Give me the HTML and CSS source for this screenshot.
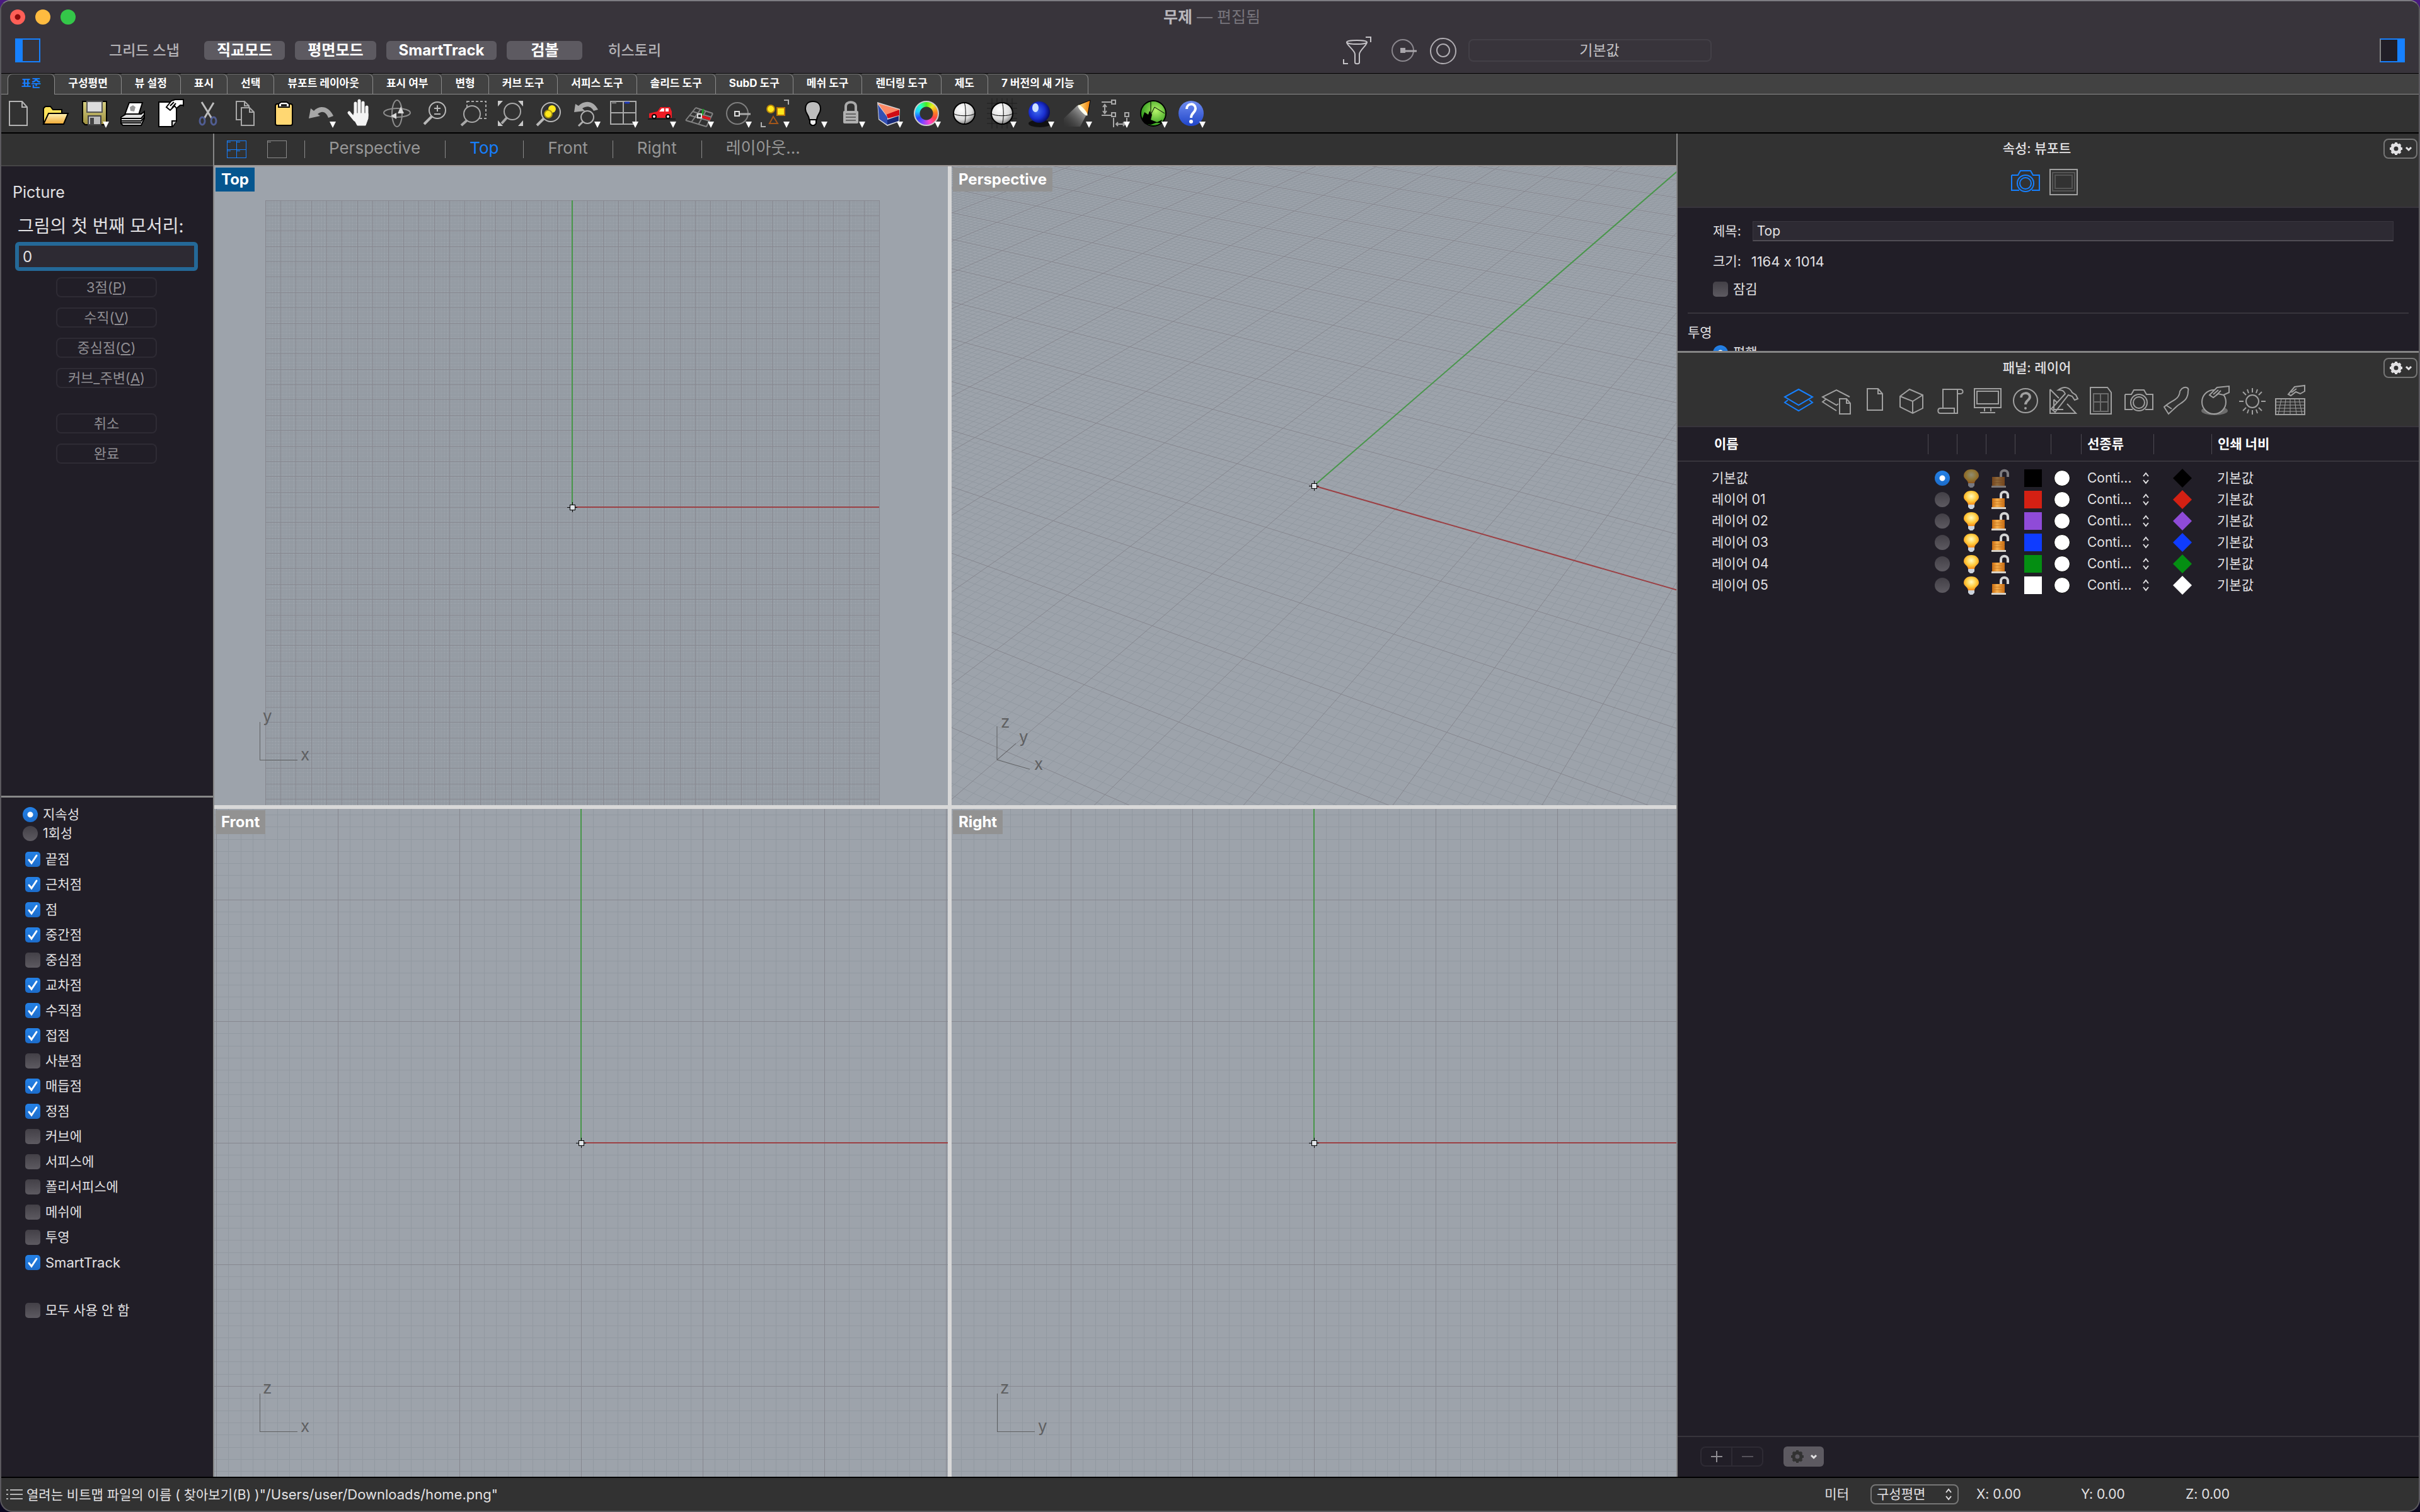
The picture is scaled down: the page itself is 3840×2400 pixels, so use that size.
FILE: index.html
```html
<!DOCTYPE html>
<html lang="ko">
<head>
    <meta charset="UTF-8">
    <meta name="viewport" content="width=device-width, initial-scale=1.0">
    <title>무제</title>
    <link rel="stylesheet" href="styles.css">
</head>
<body>

<!-- shared symbols and gradients -->
<svg class="defs" width="0" height="0" aria-hidden="true">
    <defs>
        <linearGradient id="gold" x1="0" y1="0" x2="0" y2="1"><stop offset="0" stop-color="#fff4b8"/><stop offset="1" stop-color="#f0a832"/></linearGradient>
        <linearGradient id="olive" x1="0" y1="0" x2="0" y2="1"><stop offset="0" stop-color="#d6cf83"/><stop offset="1" stop-color="#9d8f3e"/></linearGradient>
        <linearGradient id="orange" x1="0" y1="0" x2="1" y2="0"><stop offset="0" stop-color="#c8690e"/><stop offset=".4" stop-color="#f7b04e"/><stop offset="1" stop-color="#c8690e"/></linearGradient>
        <linearGradient id="cone" x1="0" y1="0" x2="1" y2="0"><stop offset="0" stop-color="#fff2a0"/><stop offset="1" stop-color="#f07c00"/></linearGradient>
        <linearGradient id="beam" x1="1" y1="0" x2="0" y2="1"><stop offset="0" stop-color="#ddd"/><stop offset="1" stop-color="#444" stop-opacity="0"/></linearGradient>
        <radialGradient id="ball" cx=".38" cy=".3" r=".8"><stop offset="0" stop-color="#fff"/><stop offset=".6" stop-color="#ddd"/><stop offset="1" stop-color="#666"/></radialGradient>
        <radialGradient id="blueball" cx=".4" cy=".45" r=".6"><stop offset="0" stop-color="#3f6af0"/><stop offset=".6" stop-color="#1a2fd0"/><stop offset="1" stop-color="#060a60"/></radialGradient>
        <radialGradient id="green" cx=".6" cy=".4" r=".6"><stop offset="0" stop-color="#b6f56a"/><stop offset="1" stop-color="#2f9a1c"/></radialGradient>
        <radialGradient id="glow" cx=".5" cy=".4" r=".6"><stop offset="0" stop-color="#fffbc0"/><stop offset=".6" stop-color="#ffc93a"/><stop offset="1" stop-color="#f58a1a"/></radialGradient>
        <linearGradient id="help" x1="0" y1="0" x2="0" y2="1"><stop offset="0" stop-color="#6f8cf0"/><stop offset="1" stop-color="#1f45c8"/></linearGradient>
    </defs>
    <symbol id="more" viewBox="0 0 10 10"><path d="M0 0H10L5 10Z" fill="#fff"/></symbol>
    <symbol id="gear" viewBox="0 0 24 24">
        <circle cx="12" cy="12" r="6" fill="none" stroke="currentColor" stroke-width="5"/>
        <path d="M12 2V7M12 17V22M2 12H7M17 12H22M5 5L8 8M16 16L19 19M19 5L16 8M8 16L5 19" stroke="currentColor" stroke-width="4"/>
    </symbol>
    <symbol id="down" viewBox="0 0 12 12"><path d="M2 4L6 8L10 4" fill="none" stroke="currentColor" stroke-width="3"/></symbol>
    <symbol id="updown" viewBox="0 0 12 24"><path d="M2 9L6 4L10 9M2 15L6 20L10 15" fill="none" stroke="currentColor" stroke-width="2"/></symbol>
    <symbol id="camera" viewBox="0 0 60 60">
        <path d="M8 19H18L22 12H38L42 19H52V43H40M20 43H8V19" fill="none" stroke="currentColor" stroke-width="2"/>
        <circle cx="30" cy="32" r="13" fill="none" stroke="currentColor" stroke-width="2"/>
        <circle cx="30" cy="32" r="9" fill="none" stroke="currentColor" stroke-width="2"/>
    </symbol>
    <symbol id="bulb" viewBox="0 0 28 30">
        <path d="M14 1C6 1 2 6 2 11C2 16 8 17 9 23H19C20 17 26 16 26 11C26 6 22 1 14 1Z" fill="url(#glow)"/>
        <path d="M9 23H19V27L16 30H12L9 27Z" fill="#ccd3dc"/>
    </symbol>
    <symbol id="unlock" viewBox="0 0 28 30">
        <path d="M15 13V8C15 1 26 1 26 8V13" fill="none" stroke="#d4d4d4" stroke-width="4"/>
        <rect x="1" y="13" width="20" height="14" fill="url(#orange)"/>
        <path d="M1 18H21M1 22H21" stroke="#c87a24"/>
        <rect x="0" y="27" width="23" height="3" fill="#d8d2c8"/>
    </symbol>
</svg>

<div class="window">
    <header class="titlebar">
        <div class="title-row">
            <div class="lights">
                <button class="light red" aria-label="닫기"></button>
                <button class="light yellow" aria-label="최소화"></button>
                <button class="light green" aria-label="확대"></button>
            </div>
            <h1 class="doc-title"><b>무제</b> — 편집됨</h1>
        </div>
        <div class="mode-row">
            <button class="side-toggle" aria-label="왼쪽 사이드바"></button>
            <div class="modes">
                <button class="mode wide">그리드 스냅</button>
                <button class="mode on">직교모드</button>
                <button class="mode on">평면모드</button>
                <button class="mode on">SmartTrack</button>
                <button class="mode on">검볼</button>
                <button class="mode">히스토리</button>
            </div>
            <div class="filters">
                <button class="filter" aria-label="필터">
                    <svg width="60" height="60" viewBox="0 0 60 60" fill="none" stroke="#c4c2c6" stroke-width="2"><ellipse cx="29" cy="17" rx="16" ry="3"/><path d="M13 17C13 22 26 30 26 36V49C26 52 33 52 33 49V36C33 30 45 22 45 17M43 9H51V17M8 44V51H15"/></svg>
                </button>
                <button class="filter" aria-label="레코드">
                    <svg width="60" height="60" viewBox="0 0 60 60" fill="none" stroke="#8a878d" stroke-width="2"><circle cx="28" cy="30" r="17"/><rect x="24" y="26" width="8" height="8" fill="#a9a6ab" stroke="none"/><path d="M32 31H50" stroke="#a9a6ab" stroke-width="3"/></svg>
                </button>
                <button class="filter" aria-label="검볼 설정">
                    <svg width="60" height="60" viewBox="0 0 60 60" fill="none" stroke="#b0adb2" stroke-width="2"><circle cx="30" cy="31" r="20"/><circle cx="30" cy="30" r="10"/></svg>
                </button>
                <button class="preset">기본값</button>
            </div>
            <button class="side-toggle right" aria-label="오른쪽 사이드바"></button>
        </div>
    </header>

    <nav class="tabs">
        <button class="tab active">표준</button>
        <button class="tab">구성평면</button>
        <button class="tab">뷰 설정</button>
        <button class="tab">표시</button>
        <button class="tab">선택</button>
        <button class="tab">뷰포트 레이아웃</button>
        <button class="tab">표시 여부</button>
        <button class="tab">변형</button>
        <button class="tab">커브 도구</button>
        <button class="tab">서피스 도구</button>
        <button class="tab">솔리드 도구</button>
        <button class="tab">SubD 도구</button>
        <button class="tab">메쉬 도구</button>
        <button class="tab">렌더링 도구</button>
        <button class="tab">제도</button>
        <button class="tab">7 버전의 새 기능</button>
    </nav>

    <div class="toolbar">
        <button class="tool" aria-label="새로 만들기"><svg viewBox="0 0 60 60" fill="none" stroke="#b4b4b4" stroke-width="2"><path d="M15 11H35L43 20V49H15ZM35 11V20H43"/></svg></button>
        <button class="tool" aria-label="열기"><svg viewBox="0 0 60 60" stroke="#000" stroke-width="2"><path d="M9 47V22L12 19H20L24 24H38V32" fill="#ffe35a"/><path d="M9 47L17 30H48L41 47Z" fill="url(#gold)"/></svg></button>
        <button class="tool" aria-label="저장"><svg viewBox="0 0 60 60" stroke="#000" stroke-width="2"><path d="M11 11H49V48H15L11 44Z" fill="url(#olive)"/><rect x="18" y="11" width="24" height="17" fill="#ddd" stroke="#555"/><rect x="20" y="34" width="20" height="14" fill="#bbb" stroke="#444"/><rect x="23" y="37" width="6" height="10" fill="#444" stroke="none"/></svg><svg class="more"><use href="#more"/></svg></button>
        <button class="tool" aria-label="인쇄"><svg viewBox="0 0 60 60" stroke="#000" stroke-width="2"><path d="M18 32L25 13H46L40 32Z" fill="#fff"/><path d="M26 20L31 17L35 20L33 27L27 26Z" fill="#999" stroke="none"/><path d="M12 36L20 31H44L49 27V38L44 49H15L12 46Z" fill="#ddd"/><path d="M12 38H44L49 32M12 42H44L49 36M12 45H44" fill="none"/></svg></button>
        <button class="tool" aria-label="문서 속성"><svg viewBox="0 0 60 60" stroke="#000" stroke-width="2"><path d="M12 12H40V42L34 51H12Z" fill="#fff"/><path d="M40 42H33V51" fill="#ccc"/><path d="M24 20L32 10L38 8H51V17H46L40 22L37 18L30 25Z" fill="#fff"/><path d="M30 18L36 12M33 21L39 14M51 8V19" fill="none"/></svg></button>
        <button class="tool" aria-label="잘라내기"><svg viewBox="0 0 60 60" fill="none" stroke-width="3"><path d="M20 12L36 38M39 13L24 38" stroke="#bdbdbd"/><ellipse cx="21" cy="42" rx="4" ry="6" stroke="#505d92"/><ellipse cx="39" cy="42" rx="4" ry="6" stroke="#505d92"/></svg></button>
        <button class="tool" aria-label="복사"><svg viewBox="0 0 60 60" fill="none" stroke="#a8a8a8" stroke-width="2"><path d="M22 40H15V11H28L35 18V21M28 11V18H35"/><path d="M23 21H36L43 28V49H23ZM36 21V28H43"/></svg></button>
        <button class="tool" aria-label="붙여넣기"><svg viewBox="0 0 60 60" stroke="#000" stroke-width="2"><rect x="17" y="15" width="27" height="34" rx="3" fill="#ffd772"/><path d="M22 20V15L26 12H35L39 15V20Z" fill="#fff"/><path d="M26 17H35" stroke-width="3"/></svg></button>
        <button class="tool" aria-label="실행 취소"><svg viewBox="0 0 60 60" fill="#a6a6a6"><path d="M10 38L13 22L18 26C27 16 42 18 49 34L41 37C37 26 30 26 24 31L28 34Z"/></svg><svg class="more"><use href="#more"/></svg></button>
        <button class="tool" aria-label="초점이동"><svg viewBox="0 0 60 60" fill="none" stroke="#f4f4f4" stroke-linecap="round"><path d="M24 34V14M30 32V10M36 32V13M42 34V20M23 40L14 29" stroke-width="5"/><path d="M22 30H44V38L40 49H27L20 36Z" fill="#f4f4f4" stroke-width="1"/></svg></button>
        <button class="tool" aria-label="뷰 회전"><svg viewBox="0 0 60 60" fill="none" stroke="#8c8c8c" stroke-width="2"><ellipse cx="30" cy="30" rx="8" ry="21"/><ellipse cx="30" cy="29" rx="21" ry="7"/><path d="M36 19L31 30H41ZM20 34L29 29V39Z" fill="#d8d8d8" stroke="none"/></svg></button>
        <button class="tool" aria-label="동적 확대/축소"><svg viewBox="0 0 60 60" fill="none" stroke="#b8b8b8" stroke-width="2"><circle cx="34" cy="25" r="13"/><path d="M34 17V27M29 22H39M29 31H39"/><path d="M25 35L13 47" stroke-width="4"/></svg></button>
        <button class="tool" aria-label="창 확대/축소"><svg viewBox="0 0 60 60" fill="none" stroke="#a8a8a8" stroke-width="2"><rect x="21" y="11" width="30" height="27" stroke-dasharray="4 3"/><circle cx="29" cy="31" r="13" fill="#323232"/><path d="M21 41L12 49" stroke-width="4"/></svg></button>
        <button class="tool" aria-label="범위 확대/축소"><svg viewBox="0 0 60 60" fill="none" stroke="#a8a8a8" stroke-width="2"><path d="M10 10H18L10 19ZM50 10H42L50 19ZM10 50H18L10 41ZM50 50H42L50 41Z" fill="#c8c8c8" stroke="none"/><circle cx="33" cy="27" r="13"/><path d="M24 37L16 46" stroke-width="4"/></svg></button>
        <button class="tool" aria-label="선택 확대/축소"><svg viewBox="0 0 60 60" fill="none" stroke="#b8b8b8" stroke-width="2"><circle cx="34" cy="28" r="15"/><circle cx="36" cy="23" r="6" fill="#ffe81c" stroke="none"/><circle cx="30" cy="31" r="6" fill="#ffe81c" stroke="#a89410"/><path d="M23 38L12 49" stroke-width="4"/></svg></button>
        <button class="tool" aria-label="뷰 변경 취소"><svg viewBox="0 0 60 60" fill="none" stroke="#b0b0b0" stroke-width="2"><path d="M11 28L13 15L18 18C28 8 42 10 49 24L42 26C37 18 31 18 24 22L28 26Z" fill="#aaa" stroke="none"/><circle cx="32" cy="36" r="10"/><path d="M25 43L18 50" stroke-width="3"/></svg><svg class="more"><use href="#more"/></svg></button>
        <button class="tool" aria-label="4개의 뷰포트"><svg viewBox="0 0 60 60" fill="none" stroke="#aaa" stroke-width="2"><rect x="9" y="11" width="40" height="36"/><path d="M29 11V47M9 29H49"/><path d="M11 13H18" stroke="#777" stroke-width="3"/><path d="M31 13H39" stroke="#1c36b8" stroke-width="3"/></svg><svg class="more"><use href="#more"/></svg></button>
        <button class="tool" aria-label="명명된 뷰"><svg viewBox="0 0 60 60"><path d="M8 39H52" stroke="#1c1c1c" stroke-width="2"/><path d="M10 37V30L23 27L28 20H43L46 27V37Z" fill="#ee1c25"/><path d="M26 27L30 22H34V27ZM36 22H41V27H36Z" fill="#fff"/><circle cx="18" cy="35" r="3" fill="#fff" stroke="#000" stroke-width="2"/><circle cx="40" cy="35" r="3" fill="#fff" stroke="#000" stroke-width="2"/></svg><svg class="more"><use href="#more"/></svg></button>
        <button class="tool" aria-label="구성평면 설정"><svg viewBox="0 0 60 60" fill="none" stroke="#828282" stroke-width="2"><path d="M24 21L8 41M32 23L17 44M40 26L28 48M51 30L41 51M24 21L51 30M19 27L49 36M14 33L46 42M8 41L41 51"/><path d="M34 33L36 23" stroke="#1f9c2a" stroke-width="3"/><path d="M34 35L47 39" stroke="#e0141c" stroke-width="4"/><rect x="27" y="31" width="6" height="6" fill="#323232" stroke="#ddd"/></svg><svg class="more"><use href="#more"/></svg></button>
        <button class="tool" aria-label="개체스냅"><svg viewBox="0 0 60 60" fill="none" stroke="#7e7e7e" stroke-width="2"><circle cx="30" cy="30" r="17"/><rect x="26" y="27" width="7" height="7" stroke="#ddd"/><path d="M34 31H51" stroke="#aaa" stroke-width="3"/></svg><svg class="more"><use href="#more"/></svg></button>
        <button class="tool" aria-label="개체 선택"><svg viewBox="0 0 60 60" fill="none" stroke-width="2"><path d="M44 9H51V16M8 44V51H15" stroke="#b0b0b0"/><circle cx="23" cy="23" r="6" fill="#ffe81c" stroke="#b8860b"/><rect x="33" y="21" width="12" height="12" fill="#ffe81c" stroke="#b8740b"/><path d="M27 35L21 46H34Z" stroke="#a3561a"/></svg><svg class="more"><use href="#more"/></svg></button>
        <button class="tool" aria-label="숨기기"><svg viewBox="0 0 60 60" stroke="#000" stroke-width="2"><path d="M30 11C22 11 18 16 18 23C18 30 24 33 24 40H36C36 33 42 30 42 23C42 16 38 11 30 11Z" fill="#bdbdbd"/><path d="M25 40H35V46L32 49H28L25 46Z" fill="#eee"/></svg><svg class="more"><use href="#more"/></svg></button>
        <button class="tool" aria-label="잠금"><svg viewBox="0 0 60 60"><path d="M22 28V19C22 10 38 10 38 19V28" fill="none" stroke="#aaa" stroke-width="4"/><rect x="18" y="26" width="24" height="20" rx="2" fill="#b0b0b0"/><path d="M22 31H38M22 36H38M22 41H38" stroke="#666" stroke-width="2"/></svg><svg class="more"><use href="#more"/></svg></button>
        <button class="tool" aria-label="레이어"><svg viewBox="0 0 60 60"><path d="M12 12L48 23L47 43L28 50L14 40Z" fill="#d8d8d8"/><path d="M13 16L28 36L28 48L15 39Z" fill="#3350b4"/><path d="M28 40L46 34V42L28 48Z" fill="#182a78"/><path d="M26 31L47 24V33L29 38Z" fill="#d00c14"/><path d="M13 14L47 24L26 32Z" fill="#ff8a66"/></svg><svg class="more"><use href="#more"/></svg></button>
        <button class="tool" aria-label="개체 속성"><span class="wheel"></span><svg class="more"><use href="#more"/></svg></button>
        <button class="tool" aria-label="음영"><svg viewBox="0 0 60 60" stroke="#000" stroke-width="2"><circle cx="30" cy="30" r="17" fill="url(#ball)"/><path d="M13 30C18 35 42 35 47 30M30 13C33 18 33 42 30 47" fill="none" stroke-width="1"/></svg></button>
        <button class="tool" aria-label="모든 뷰포트 음영"><svg viewBox="0 0 60 60" stroke="#000" stroke-width="2"><path d="M14 6V54M22 6V54M30 6V54M38 6V54M46 6V54M6 14H54M6 22H54M6 30H54M6 38H54M6 46H54" stroke="#1e1e1e" stroke-width="1"/><circle cx="30" cy="30" r="17" fill="url(#ball)"/><path d="M13 30C18 35 42 35 47 30M30 13C33 18 33 42 30 47" fill="none" stroke-width="1"/></svg><svg class="more"><use href="#more"/></svg></button>
        <button class="tool" aria-label="렌더링"><svg viewBox="0 0 60 60"><ellipse cx="30" cy="46" rx="18" ry="6" fill="#111"/><circle cx="29" cy="28" r="17" fill="url(#blueball)"/><ellipse cx="23" cy="21" rx="5" ry="7" fill="#cfe2ff"/></svg><svg class="more"><use href="#more"/></svg></button>
        <button class="tool" aria-label="스포트라이트"><svg viewBox="0 0 60 60"><path d="M30 17L44 32L34 51H8V38Z" fill="url(#beam)"/><path d="M30 17L50 9L46 32Z" fill="url(#cone)" stroke="#000"/><ellipse cx="38" cy="25" rx="3" ry="11" fill="#ffe" transform="rotate(-42 38 25)"/></svg><svg class="more"><use href="#more"/></svg></button>
        <button class="tool" aria-label="치수"><svg viewBox="0 0 60 60" fill="none" stroke="#a8a8a8" stroke-width="2"><path d="M8 12H24M8 33H24M13 17V28M10 20L13 16L16 20M10 26L13 30L16 26M27 37V52M48 37V52M31 47H45M34 44L31 47L34 50M42 44L45 47L42 50"/><rect x="24" y="9" width="6" height="6"/><rect x="24" y="29" width="6" height="6"/><rect x="45" y="29" width="6" height="6"/></svg><svg class="more"><use href="#more"/></svg></button>
        <button class="tool" aria-label="Grasshopper"><svg viewBox="0 0 60 60"><circle cx="30" cy="30" r="20" fill="url(#green)" stroke="#000" stroke-width="2"/><path d="M12 40L16 28L22 32L24 26L28 32L26 40L36 44L44 40L42 45H34L26 48L16 46Z"/><path d="M26 29V11M26 32L32 20L48 30" fill="none" stroke="#000" stroke-width="1"/></svg><svg class="more"><use href="#more"/></svg></button>
        <button class="tool" aria-label="도움말"><svg viewBox="0 0 60 60"><circle cx="30" cy="30" r="20" fill="url(#help)"/><path d="M23 23C23 13 37 13 37 22C37 29 30 29 30 37" fill="none" stroke="#fff" stroke-width="4"/><circle cx="30" cy="43" r="3" fill="#fff"/></svg><svg class="more"><use href="#more"/></svg></button>
    </div>

    <main class="main">
        <aside class="left">
            <div class="left-head"></div>
            <section class="command">
                <h2 class="command-name">Picture</h2>
                <label class="command-label" for="corner">그림의 첫 번째 모서리:</label>
                <input class="command-input" type="text" id="corner" value="0">
                <div class="options">
                    <button class="option">3점(<u>P</u>)</button>
                    <button class="option">수직(<u>V</u>)</button>
                    <button class="option">중심점(<u>C</u>)</button>
                    <button class="option">커브_주변(<u>A</u>)</button>
                </div>
                <div class="options">
                    <button class="option">취소</button>
                    <button class="option">완료</button>
                </div>
            </section>
            <section class="osnap">
                <div class="osnap-mode">
                    <label><input type="radio" name="persist" checked>지속성</label>
                    <label><input type="radio" name="persist">1회성</label>
                </div>
                <label><input type="checkbox" checked>끝점</label>
                <label><input type="checkbox" checked>근처점</label>
                <label><input type="checkbox" checked>점</label>
                <label><input type="checkbox" checked>중간점</label>
                <label><input type="checkbox">중심점</label>
                <label><input type="checkbox" checked>교차점</label>
                <label><input type="checkbox" checked>수직점</label>
                <label><input type="checkbox" checked>접점</label>
                <label><input type="checkbox">사분점</label>
                <label><input type="checkbox" checked>매듭점</label>
                <label><input type="checkbox" checked>정점</label>
                <label><input type="checkbox">커브에</label>
                <label><input type="checkbox">서피스에</label>
                <label><input type="checkbox">폴리서피스에</label>
                <label><input type="checkbox">메쉬에</label>
                <label><input type="checkbox">투영</label>
                <label class="latin"><input type="checkbox" checked>SmartTrack</label>
                <label class="osnap-none"><input type="checkbox">모두 사용 안 함</label>
            </section>
        </aside>

        <section class="center">
            <nav class="view-tabs">
                <button class="layout-icon" aria-label="4개 뷰"><svg width="32" height="30" viewBox="0 0 32 30" fill="none" stroke="#1680ff" shape-rendering="crispEdges"><path d="M1 1H31V28H1ZM16 1V28M1 15H31M2 3H7M17 3H22M2 17H7M17 17H22"/></svg></button>
                <button class="layout-icon" aria-label="단일 뷰"><svg width="32" height="30" viewBox="0 0 32 30" fill="none" stroke="#8a8a8a" shape-rendering="crispEdges"><path d="M1 1H31V28H1ZM2 3H7"/></svg></button>
                <button class="view-tab">Perspective</button>
                <button class="view-tab active">Top</button>
                <button class="view-tab">Front</button>
                <button class="view-tab">Right</button>
                <button class="view-tab">레이아웃...</button>
            </nav>
            <div class="viewports">
                <div class="viewport"><svg class="grid" data-view="top"></svg><span class="view-name active">Top</span></div>
                <div class="viewport"><svg class="grid" data-view="perspective"></svg><span class="view-name">Perspective</span></div>
                <div class="viewport"><svg class="grid" data-view="front"></svg><span class="view-name">Front</span></div>
                <div class="viewport"><svg class="grid" data-view="right"></svg><span class="view-name">Right</span></div>
            </div>
        </section>

        <aside class="right">
            <section class="properties">
                <div class="panel-head">
                    <div class="panel-title">
                        <h2>속성: 뷰포트</h2>
                        <button class="gear" aria-label="패널 옵션"><svg width="24" height="24"><use href="#gear"/></svg><svg width="12" height="12"><use href="#down"/></svg></button>
                    </div>
                    <div class="panel-icons">
                        <button class="active" aria-label="뷰포트"><svg><use href="#camera"/></svg></button>
                        <button aria-label="프레임"><svg viewBox="0 0 60 60" fill="none" stroke="#9a9a9a" stroke-width="2"><rect x="9" y="10" width="43" height="40"/><rect x="13" y="15" width="35" height="29" stroke="#555"/><rect x="17" y="19" width="27" height="21" stroke="#555"/></svg></button>
                    </div>
                </div>
                <div class="form">
                    <div class="field"><label for="viewTitle">제목:</label><input type="text" id="viewTitle" value="Top"></div>
                    <div class="field size"><span>크기:</span><span class="latin">1164 x 1014</span></div>
                    <label class="lock"><input type="checkbox">잠김</label>
                    <h3>투영</h3>
                    <label class="projection"><input type="radio" name="projection" checked>평행</label>
                </div>
            </section>

            <section class="layers">
                <div class="panel-head">
                    <div class="panel-title">
                        <h2>패널: 레이어</h2>
                        <button class="gear" aria-label="패널 옵션"><svg width="24" height="24"><use href="#gear"/></svg><svg width="12" height="12"><use href="#down"/></svg></button>
                    </div>
                    <div class="panel-icons">
                        <button class="active" aria-label="레이어"><svg viewBox="0 0 60 60"><path d="M30 11L52 23L30 36L8 23ZM13 28L8 32L30 45L52 32L47 28"/></svg></button>
                        <button aria-label="레이어 상태"><svg viewBox="0 0 60 60"><path d="M33 34L30 36L8 23L30 12L51 23M13 27L8 31L30 45M35 26H46L52 33V50H35ZM46 26V33H52"/></svg></button>
                        <button aria-label="속성"><svg viewBox="0 0 60 60"><path d="M19 10H36L43 18V44H19ZM36 10V18H43"/></svg></button>
                        <button aria-label="블록"><svg viewBox="0 0 60 60"><path d="M11 22L26 11L47 20V41L31 49L11 39ZM11 22L31 30L47 20M31 30V49"/></svg></button>
                        <button aria-label="메모"><svg viewBox="0 0 60 60"><path d="M19 41V11H46C52 11 52 18 47 18H42V49H15C10 49 10 41 15 41H37V49M42 11V18"/></svg></button>
                        <button aria-label="표시"><svg viewBox="0 0 60 60"><path d="M9 10H51V40H9ZM13 14H47V34H13ZM25 40V46M35 40V46M18 48H42"/></svg></button>
                        <button aria-label="도움말"><svg viewBox="0 0 60 60"><circle cx="30" cy="29" r="19"/><path d="M23 24C23 15 37 15 37 23C37 28 30 29 30 35" stroke-width="4"/><circle cx="30" cy="41" r="1"/></svg></button>
                        <button aria-label="도구"><svg viewBox="0 0 60 60"><path d="M9 11V49H50L36 34M9 11L23 25M15 27V43H30M15 27L20 32M22 12C32 5 40 8 44 16L50 20L53 26L48 28L44 22L38 20L17 47L11 42L33 18C31 13 28 12 22 12Z"/></svg></button>
                        <button aria-label="시트"><svg viewBox="0 0 60 60"><path d="M13 8H40L46 16V50H13Z"/><path d="M18 18H41V46H18ZM29 18V46M18 31H41" stroke="#6c6c6c"/></svg></button>
                        <button aria-label="명명된 뷰"><svg><use href="#camera"/></svg></button>
                        <button aria-label="재질"><svg viewBox="0 0 60 60"><path d="M38 10C44 6 50 8 48 14C48 30 36 32 30 38L17 50L10 39C22 28 34 28 35 14Z"/><path d="M13 36L22 42"/></svg></button>
                        <button aria-label="환경"><svg viewBox="0 0 60 60"><ellipse cx="30" cy="45" rx="21" ry="7" fill="#6c6c6c" stroke="none"/><circle cx="29" cy="31" r="19" fill="#323232"/><path d="M22 20L34 8L53 6V16L44 20L36 18L28 24Z" fill="#323232"/><path d="M28 19L36 12M32 21L40 13"/></svg></button>
                        <button aria-label="태양"><svg viewBox="0 0 60 60"><circle cx="30" cy="30" r="10"/><path d="M30 9V16M30 44V51M9 30H16M44 30H51M15 15L20 20M40 40L45 45M45 15L40 20M20 40L15 45M22 11L24 17M36 43L38 49M38 11L36 17M24 43L22 49"/></svg></button>
                        <button aria-label="지평면"><svg viewBox="0 0 60 60"><path d="M7 26H53V51H7ZM27 19L37 7L53 5V14L46 18L39 15L31 21ZM32 16L40 10"/><path d="M16 26L11 51M23 26L20 51M30 26V51M37 26L40 51M44 26L49 51M7 31H53M7 36H53M7 41H53M7 46H53" stroke-width="1"/></svg></button>
                    </div>
                </div>
                <table class="layer-table">
                    <colgroup>
                        <col class="c-name"><col class="c-icon"><col class="c-icon"><col class="c-icon"><col class="c-color"><col class="c-mat"><col class="c-line"><col class="c-print"><col>
                    </colgroup>
                    <thead>
                        <tr><th>이름</th><th></th><th></th><th></th><th></th><th></th><th>선종류</th><th></th><th>인쇄 너비</th></tr>
                    </thead>
                    <tbody id="layers"></tbody>
                </table>
                <div class="layer-foot">
                    <div class="add-remove"><button aria-label="추가"><svg width="20" height="20" viewBox="0 0 20 20"><path d="M10 1V19M1 10H19"/></svg></button><button aria-label="삭제"><svg class="off" width="20" height="20" viewBox="0 0 20 20"><path d="M1 10H19"/></svg></button></div>
                    <button class="layer-gear" aria-label="레이어 옵션"><svg class="cog" width="24" height="24"><use href="#gear"/></svg><svg width="12" height="12"><use href="#down"/></svg></button>
                </div>
            </section>
        </aside>
    </main>

    <footer class="status">
        <svg width="26" height="20" viewBox="0 0 26 20" stroke="#b5b5b5" stroke-width="2"><path d="M0 3H3M0 10H3M0 17H3M6 3H26M6 10H26M6 17H26"/></svg>
        <span class="prompt">열려는 비트맵 파일의 이름 ( 찾아보기(B) )<span class="latin">"/Users/user/Downloads/home.png"</span></span>
        <span class="unit">미터</span>
        <span class="plane"><select aria-label="구성평면"><option>구성평면</option></select><svg width="12" height="24"><use href="#updown"/></svg></span>
        <span class="coord">X: 0.00</span>
        <span class="coord">Y: 0.00</span>
        <span class="coord">Z: 0.00</span>
    </footer>
</div>

<script src="script.js"></script>
</body>
</html>
```
FILE: styles.css
```css
* {
    box-sizing: border-box;
}
body {
    margin: 0;
    font-family: Inter, "Noto Sans CJK KR", sans-serif;
    font-size: 21px;
    line-height: 28px;
    font-feature-settings: "calt" 0;
    color: #e2e1e3;
    background: linear-gradient(#4a1a80, #0c0820);
}
button, input, select {
    font: inherit;
    color: inherit;
    margin: 0;
}
button {
    padding: 0;
    border: none;
    background: none;
}
svg {
    display: block;
}
.defs {
    position: absolute;
}
h1, h2, h3 {
    margin: 0;
    font-size: 21px;
    font-weight: 500;
}
.latin {
    font-size: 22px;
}
.window {
    display: flex;
    flex-direction: column;
    height: 100vh;
    border: 2px solid #5b595e;
    border-top-color: #7d7c82;
    border-radius: 16px 16px 20px 20px;
    overflow: hidden;
    background: #323232;
}

/* title bar */
.titlebar {
    background: #38343b;
    border-bottom: 1px solid #000;
}
.title-row {
    display: flex;
    align-items: center;
    height: 50px;
    padding-left: 14px;
}
.lights {
    display: flex;
    gap: 16px;
    width: 0;
}
.light {
    flex: none;
    width: 24px;
    height: 24px;
    border-radius: 50%;
}
.light.red {
    background: radial-gradient(#8c0b0b 4px, #ff5f57 5px);
}
.light.yellow {
    background: #febb40;
}
.light.green {
    background: #34c749;
}
.doc-title {
    flex: 1;
    padding-right: 8px;
    text-align: center;
    font-size: 25px;
    font-weight: 400;
    color: #77747b;
}
.doc-title b {
    color: #b9b7bc;
}
.mode-row {
    display: flex;
    align-items: center;
    height: 64px;
    padding: 0 22px 8px;
    font-size: 23px;
}
.side-toggle {
    width: 40px;
    height: 38px;
    border: 2px solid #1680ff;
    border-left-width: 12px;
}
.side-toggle.right {
    border-left-width: 2px;
    border-right-width: 12px;
}
.modes {
    display: flex;
    flex: 1;
    gap: 16px;
    padding-left: 91px;
}
.mode {
    height: 30px;
    padding: 0 24px;
    color: #b4b2b6;
    line-height: 28px;
    font-weight: 500;
}
.mode.wide {
    padding: 0 23px 0 18px;
}
.mode.on {
    min-width: 120px;
    padding: 0 20px;
    border-radius: 6px;
    background: #5d5a61;
    color: #fff;
    font-size: 24px;
    font-weight: 700;
}
.filters {
    display: flex;
    align-items: center;
    margin-right: 1060px;
}
.filter {
    width: 62px;
}
.filter:first-child {
    margin-right: 12px;
}
.filter svg {
    margin: -8px 0;
}
.preset {
    width: 386px;
    height: 36px;
    margin-left: 8px;
    padding-left: 30px;
    border: 2px solid #434047;
    border-radius: 8px;
    color: #c4c2c6;
    line-height: 30px;
}

/* tool tabs */
.tabs {
    display: flex;
    height: 33px;
    padding-left: 10px;
    background: #424242;
    border-bottom: 1px solid #8b8b8b;
}
.tab {
    height: 33px;
    padding: 0 21px 6px;
    border-top: 1px solid #777;
    border-right: 1px solid #8b8b8b;
    border-radius: 0 8px 0 0;
    font-size: 17px;
    font-weight: 700;
    color: #fff;
}
.tab.active {
    border-left: 1px solid #8b8b8b;
    border-radius: 8px 8px 0 0;
    background: #323232;
    color: #1680ff;
}
.toolbar {
    display: flex;
    height: 62px;
    margin-left: -2px;
    border-bottom: 2px solid #000;
}
.tool {
    position: relative;
    width: 60px;
    height: 60px;
}
.tool svg {
    width: 60px;
    height: 60px;
}
.tool .more {
    position: absolute;
    right: 7px;
    bottom: 7px;
    width: 10px;
    height: 10px;
}
.wheel {
    display: block;
    width: 40px;
    height: 40px;
    margin: 10px;
    border: 2px solid #ccc;
    border-radius: 50%;
    background: radial-gradient(#323232 10px, transparent 11px), conic-gradient(from 120deg, #f44, #f4c, #84f, #24f, #2cf, #2fc, #4e2, #ee2, #f82, #f44);
}

.main {
    display: grid;
    flex: 1;
    grid-template-columns: 338px 1fr 1178px;
    min-height: 0;
}

/* left side */
.left {
    display: flex;
    flex-direction: column;
    border-right: 2px solid #858585;
    background: #211e27;
}
.left-head {
    height: 52px;
    background: #323232;
    border-bottom: 2px solid #454545;
}
.command {
    display: flex;
    flex-direction: column;
    flex: 0 0 47%;
    padding: 27px 20px 0 22px;
    border-bottom: 3px solid #888;
}
.command-name {
    font-size: 25px;
    font-weight: 400;
    padding-bottom: 20px;
    margin-left: -4px;
}
.command-label {
    padding: 0 4px;
    font-size: 28px;
    line-height: 40px;
    white-space: nowrap;
}
.command-input {
    width: 290px;
    height: 46px;
    margin-top: 5px;
    padding: 0 6px;
    border: 6px solid #246998;
    border-radius: 6px;
    outline: none;
    background: #2d2a33;
    font-size: 24px;
}
.options {
    display: flex;
    flex-direction: column;
    align-items: center;
    gap: 16px;
    padding: 10px 4px 30px 0;
}
.option {
    width: 160px;
    height: 32px;
    border: 2px solid #2e2b34;
    border-radius: 8px;
    font-size: 22px;
    line-height: 24px;
    color: #8f8d92;
}
.osnap {
    display: flex;
    flex-direction: column;
    flex: 1;
    padding: 12px 38px 0;
}
.osnap label {
    display: flex;
    align-items: center;
    gap: 8px;
    height: 40px;
}
.osnap-mode {
    margin: 0 -4px 6px;
}
.osnap .osnap-mode label {
    height: 30px;
}
.osnap .osnap-none {
    margin-top: 36px;
}
input[type="checkbox"], input[type="radio"] {
    appearance: none;
    flex: none;
    width: 24px;
    height: 24px;
    border-radius: 5px;
    background: linear-gradient(#434047, #5d5a61);
}
input[type="radio"] {
    border-radius: 50%;
}
input[type="checkbox"]:checked {
    background: url("data:image/svg+xml,%3Csvg xmlns='http://www.w3.org/2000/svg' viewBox='0 0 24 24'%3E%3Cpath d='M6 13L10 18L18 6' fill='none' stroke='white' stroke-width='3' stroke-linecap='round'/%3E%3C/svg%3E"), linear-gradient(#2481e6, #1c6cca);
}
input[type="radio"]:checked {
    background: radial-gradient(#fff 4px, transparent 5px), linear-gradient(#2481e6, #1c6cca);
}

/* viewports */
.center {
    display: flex;
    flex-direction: column;
    min-width: 0;
}
.view-tabs {
    display: flex;
    align-items: center;
    height: 50px;
    padding-left: 19px;
    font-size: 26px;
}
.layout-icon {
    width: 32px;
    margin-right: 32px;
}
.layout-icon + .view-tab {
    margin-left: -4px;
}
.view-tab {
    height: 28px;
    padding: 0 39px 4px 38px;
    border-left: 1px solid #8a8a8a;
    line-height: 24px;
    color: #979797;
}
.view-tab.active {
    color: #1680ff;
}
.viewports {
    display: grid;
    flex: 1;
    grid-template-columns: 1164fr 1150fr;
    grid-template-rows: 1014fr 1060fr;
    gap: 6px;
    border-top: 2px solid #9b9593;
    background: #d8d8d8;
    min-height: 0;
}
.viewport {
    position: relative;
    min-width: 0;
    min-height: 0;
    overflow: hidden;
    background: #9da3ab;
}
.grid {
    position: absolute;
    width: 100%;
    height: 100%;
}
.grid path {
    fill: none;
}
.grid .minor {
    stroke: #9299a1;
}
.grid .major {
    stroke: #86878f;
}
.grid .axis-h {
    stroke: #9c4044;
    stroke-width: 2;
}
.grid .axis-v {
    stroke: #48964a;
    stroke-width: 2;
}
.grid .origin {
    fill: #dfe2e6;
    stroke: #000;
}
.grid .tripod {
    stroke: #5f6062;
}
.grid text {
    fill: #5f6062;
    font-size: 26px;
}
.view-name {
    position: absolute;
    left: 2px;
    top: 2px;
    height: 38px;
    padding: 0 9px;
    background: #929292;
    color: #fff;
    font-size: 24px;
    font-weight: 700;
    line-height: 38px;
}
.view-name.active {
    background: #05568f;
}

/* right side */
.right {
    display: flex;
    flex-direction: column;
    border-left: 2px solid #858585;
    background: #211e27;
    min-height: 0;
}
.properties {
    height: 348px;
    overflow: hidden;
    border-bottom: 3px solid #858585;
}
.panel-head {
    height: 118px;
    background: #323232;
    border-bottom: 2px solid #38353c;
}
.panel-title {
    display: flex;
    align-items: center;
    height: 47px;
    padding: 0 2px 0 20px;
}
.panel-title h2 {
    flex: 1;
    text-align: center;
}
.gear {
    display: flex;
    align-items: center;
    justify-content: center;
    gap: 2px;
    width: 54px;
    height: 32px;
    border: 2px solid #777;
    border-radius: 8px;
}
.panel-icons {
    display: flex;
    justify-content: center;
    padding-right: 12px;
    color: #a0a0a0;
}
.panel-icons .active {
    color: #1680ff;
}
.panel-icons svg {
    width: 60px;
    height: 60px;
    fill: none;
    stroke: currentColor;
    stroke-width: 2;
}
.form {
    padding: 20px 16px 0;
}
.field {
    display: flex;
    align-items: center;
    gap: 18px;
    height: 34px;
    padding: 0 24px 0 40px;
}
.field.size {
    gap: 16px;
    margin-top: 14px;
}
.field input {
    flex: 1;
    height: 32px;
    padding: 0 6px;
    border: 1px solid #3a3740;
    border-bottom: 2px solid #514e55;
    background: #2d2a33;
}
.lock, .projection {
    display: flex;
    align-items: center;
    gap: 8px;
    padding-left: 40px;
}
.lock {
    height: 34px;
    margin: 10px 0 20px;
}
.form h3 {
    border-top: 2px solid #38353c;
    padding-top: 16px;
    margin-bottom: 4px;
    font-weight: 400;
}
.layers {
    display: flex;
    flex-direction: column;
    flex: 1;
    min-height: 0;
}
.layer-table {
    width: 100%;
    table-layout: fixed;
    border-collapse: collapse;
}
.c-name { width: 397px; }
.c-icon { width: 46px; }
.c-color { width: 57px; }
.c-mat { width: 48px; }
.c-line { width: 115px; }
.c-print { width: 92px; }
.layer-table th {
    height: 54px;
    padding: 0;
    text-align: left;
    border-bottom: 2px solid #38353c;
    font-weight: 700;
    color: #fff;
    background: linear-gradient(#4c4951, #4c4951) left center / 1px 32px no-repeat;
}
.layer-table th:nth-child(n+7) {
    padding-left: 10px;
}
.layer-table th:first-child {
    padding-left: 58px;
    background: none;
}
.layer-table td {
    height: 34px;
    padding: 0;
    text-align: center;
}
.layer-table tbody::before {
    content: "";
    display: block;
    height: 9px;
}
.layer-table td:first-child {
    padding-left: 54px;
    text-align: left;
}
.layer-table td:last-child {
    padding-left: 9px;
    text-align: left;
}
.layer-table td svg, .layer-table td input {
    display: block;
    margin: 0 auto;
}
.dim {
    opacity: 0.5;
}
.swatch {
    display: block;
    width: 28px;
    height: 28px;
    margin: 0 auto;
}
.material {
    display: block;
    width: 26px;
    height: 26px;
    margin-left: 5px;
    border: 1px solid #000;
    border-radius: 50%;
    background: #fff;
}
.linetype, .plane {
    display: flex;
    align-items: center;
    justify-content: space-between;
}
.linetype {
    padding: 0 6px 0 10px;
}
.layer-table .linetype svg {
    margin: 0;
}
select {
    appearance: none;
    padding: 0;
    border: none;
    outline: none;
    background: none;
}
.layer-foot {
    display: flex;
    gap: 32px;
    margin-top: auto;
    height: 65px;
    padding: 15px 36px 0;
    border-top: 2px solid #38353c;
}
.add-remove {
    display: flex;
    width: 100px;
    height: 32px;
    border: 2px solid #2e2b34;
    border-radius: 8px;
}
.add-remove button {
    display: flex;
    align-items: center;
    justify-content: center;
    flex: 1;
}
.add-remove button + button {
    border-left: 2px solid #2e2b34;
}
.add-remove svg {
    stroke: #8f8d92;
    stroke-width: 2;
}
.add-remove .off {
    stroke: #55525a;
}
.layer-gear {
    display: flex;
    align-items: center;
    justify-content: center;
    gap: 8px;
    width: 64px;
    height: 32px;
    border-radius: 6px;
    background: #5d5a61;
}
.cog {
    color: #323232;
}

/* status bar */
.status {
    display: flex;
    align-items: center;
    height: 54px;
    padding-left: 8px;
    border-top: 2px solid #000;
}
.prompt {
    flex: 1;
    padding-left: 6px;
}
.plane {
    width: 140px;
    height: 32px;
    margin: 0 28px 0 34px;
    padding: 0 8px;
    border: 2px solid #777;
    border-radius: 8px;
}
.plane select {
    line-height: 26px;
}
.coord {
    width: 166px;
}
.coord:last-child {
    width: 370px;
}
```
FILE: script.js
```js
const SVG_NS = 'http://www.w3.org/2000/svg';

const layers = [
    { name: '기본값', color: '#000000', current: true },
    { name: '레이어 01', color: '#d42013' },
    { name: '레이어 02', color: '#8f4bd8' },
    { name: '레이어 03', color: '#0f3cff' },
    { name: '레이어 04', color: '#048e12' },
    { name: '레이어 05', color: '#ffffff' }
];

document.getElementById('layers').innerHTML = layers.map(layer => `
    <tr>
        <td>${layer.name}</td>
        <td><input type="radio" name="layer" aria-label="${layer.name}" ${layer.current ? 'checked' : ''}></td>
        <td><svg class="${layer.current ? 'dim' : ''}" width="28" height="30"><use href="#bulb"/></svg></td>
        <td><svg class="${layer.current ? 'dim' : ''}" width="28" height="30"><use href="#unlock"/></svg></td>
        <td><span class="swatch" style="background: ${layer.color}"></span></td>
        <td><span class="material"></span></td>
        <td><div class="linetype"><select aria-label="선종류"><option>Conti...</option></select><svg width="12" height="24"><use href="#updown"/></svg></div></td>
        <td><svg width="30" height="30" viewBox="0 0 30 30"><path d="M15 0L30 15L15 30L0 15Z" fill="${layer.color}"/></svg></td>
        <td>기본값</td>
    </tr>
`).join('');

// step = pixels between major lines, 20 major lines each way from the origin
const COUNT = 20;
const views = {
    top: { step: 24.37, dx: -14, dy: 34, labels: ['x', 'y'] },
    front: { step: 193, dx: 0, dy: 0, labels: ['x', 'z'] },
    right: { step: 193, dx: 0, dy: 0, labels: ['y', 'z'] }
};

function addPath(svg, cls, d, crisp) {
    const path = document.createElementNS(SVG_NS, 'path');
    path.setAttribute('class', cls);
    path.setAttribute('d', d);
    if (crisp) path.setAttribute('shape-rendering', 'crispEdges');
    svg.appendChild(path);
}

function addText(svg, x, y, value) {
    const text = document.createElementNS(SVG_NS, 'text');
    text.setAttribute('x', x);
    text.setAttribute('y', y);
    text.textContent = value;
    svg.appendChild(text);
}

function addOrigin(svg, x, y) {
    addPath(svg, 'origin', `M${x - 4} ${y - 4}h8v8h-8zM${x - 8} ${y}h4M${x + 4} ${y}h4M${x} ${y - 8}v4M${x} ${y + 4}v4`, true);
}

function drawFlat(svg, view) {
    const w = svg.clientWidth;
    const h = svg.clientHeight;
    const ox = Math.round(w / 2 + view.dx);
    const oy = Math.round(h / 2 + view.dy);
    const size = view.step * COUNT;
    let minor = '';
    let major = '';
    for (let i = -COUNT * 10; i <= COUNT * 10; i++) {
        const p = Math.round(i * view.step / 10);
        const line = `M${ox + p} ${oy - size}V${oy + size}M${ox - size} ${oy + p}H${ox + size}`;
        if (i % 10 === 0) major += line;
        else minor += line;
    }
    addPath(svg, 'minor', minor, true);
    addPath(svg, 'major', major, true);
    addPath(svg, 'axis-h', `M${ox} ${oy}H${ox + size}`, true);
    addPath(svg, 'axis-v', `M${ox} ${oy}V${oy - size}`, true);
    addOrigin(svg, ox, oy);
    addPath(svg, 'tripod', `M72 ${h - 132}V${h - 72}H132`, true);
    addText(svg, 137, h - 71, view.labels[0]);
    addText(svg, 77, h - 132, view.labels[1]);
}

function drawPerspective(svg) {
    const h = svg.clientHeight;
    const ox = svg.clientWidth / 2;
    const oy = h / 2;
    // ground plane to screen
    const depth = (x, y) => 1 - 0.0296 * x + 0.0517 * y;
    const project = (x, y) => {
        const d = depth(x, y);
        return `${(ox + (125.4 * x + 72.3 * y) / d).toFixed(1)} ${(oy + (36.05 * x - 62.6 * y) / d).toFixed(1)}`;
    };
    let minor = '';
    let major = '';
    for (let i = -COUNT * 10; i <= COUNT * 10; i++) {
        const p = i / 10;
        // keep the near end in front of the camera
        const near = Math.max(-COUNT, (0.0296 * p - 0.9) / 0.0517);
        const far = Math.min(COUNT, (0.9 + 0.0517 * p) / 0.0296);
        let line = `M${project(p, near)}L${project(p, COUNT)}`;
        if (far > -COUNT) line += `M${project(-COUNT, p)}L${project(far, p)}`;
        if (i % 10 === 0) major += line;
        else minor += line;
    }
    addPath(svg, 'minor', minor);
    addPath(svg, 'major', major);
    addPath(svg, 'axis-h', `M${project(0, 0)}L${project(COUNT, 0)}`);
    addPath(svg, 'axis-v', `M${project(0, 0)}L${project(0, COUNT)}`);
    addOrigin(svg, ox, oy);
    addPath(svg, 'tripod', `M72 ${h - 125}V${h - 72}L102 ${h - 98}M72 ${h - 72}L124 ${h - 57}`);
    addText(svg, 78, h - 123, 'z');
    addText(svg, 107, h - 99, 'y');
    addText(svg, 131, h - 56, 'x');
}

function drawViews() {
    document.querySelectorAll('.grid').forEach(svg => {
        svg.textContent = '';
        if (svg.dataset.view === 'perspective') drawPerspective(svg);
        else drawFlat(svg, views[svg.dataset.view]);
    });
}

drawViews();
window.addEventListener('resize', drawViews);
```
